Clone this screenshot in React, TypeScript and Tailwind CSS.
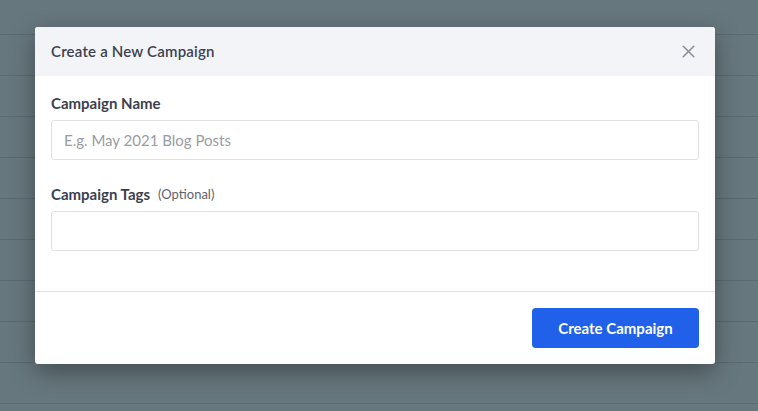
import { X } from 'lucide-react';

const rows = Array.from({ length: 10 }, (_, i) => i);

export default function App() {
  return (
    <div
      className="relative h-[411px] w-[758px] overflow-hidden bg-[#66777d]"
      style={{ fontFamily: 'Lato, "Open Sans", sans-serif' }}
    >
      {/* table rows behind the overlay */}
      <div className="flex flex-col pt-[34px]">
        {rows.map((r) => (
          <div key={r} className="h-[41px] border-t border-[#5b6a70]" />
        ))}
      </div>

      <div className="absolute left-[35px] top-[27px] w-[680px] overflow-hidden rounded-[3px] bg-white shadow-[0_8px_24px_rgba(0,0,0,0.35)]">
        <div className="flex h-[49px] items-center justify-between bg-[#f3f4f8] pl-4 pr-4">
          <h2 className="text-[15px] font-semibold tracking-[0.2px] text-[#3b3f4e]">Create a New Campaign</h2>
          <button className="text-[#8a8d95]">
            <X size={21} strokeWidth={1.75} />
          </button>
        </div>

        <div className="flex flex-col px-4 pt-[17px] pb-10">
          <label className="text-[15px] font-bold leading-[20px] text-[#3b3f4e]">Campaign Name</label>
          <input
            placeholder="E.g. May 2021 Blog Posts"
            className="mt-[7px] h-[40px] rounded-[3px] border border-[#e1e2e6] px-3 text-[15px] text-[#3b3f4e] placeholder-[#9a9ca3] outline-none"
          />
          <div className="mt-[24px] flex h-[20px] items-center gap-[8px]">
            <label className="text-[15px] font-bold leading-[20px] text-[#3b3f4e]">Campaign Tags</label>
            <span className="pt-[1px] text-[13px] text-[#5f6270]">(Optional)</span>
          </div>
          <input className="mt-[7px] h-[40px] rounded-[3px] border border-[#e1e2e6] px-3 text-[15px] outline-none" />
        </div>

        <div className="flex justify-end border-t border-[#e3e4e8] px-4 py-4">
          <button className="h-[40px] w-[167px] rounded-[4px] bg-[#2160e9] text-[15px] font-bold text-white">
            Create Campaign
          </button>
        </div>
      </div>
    </div>
  );
}
